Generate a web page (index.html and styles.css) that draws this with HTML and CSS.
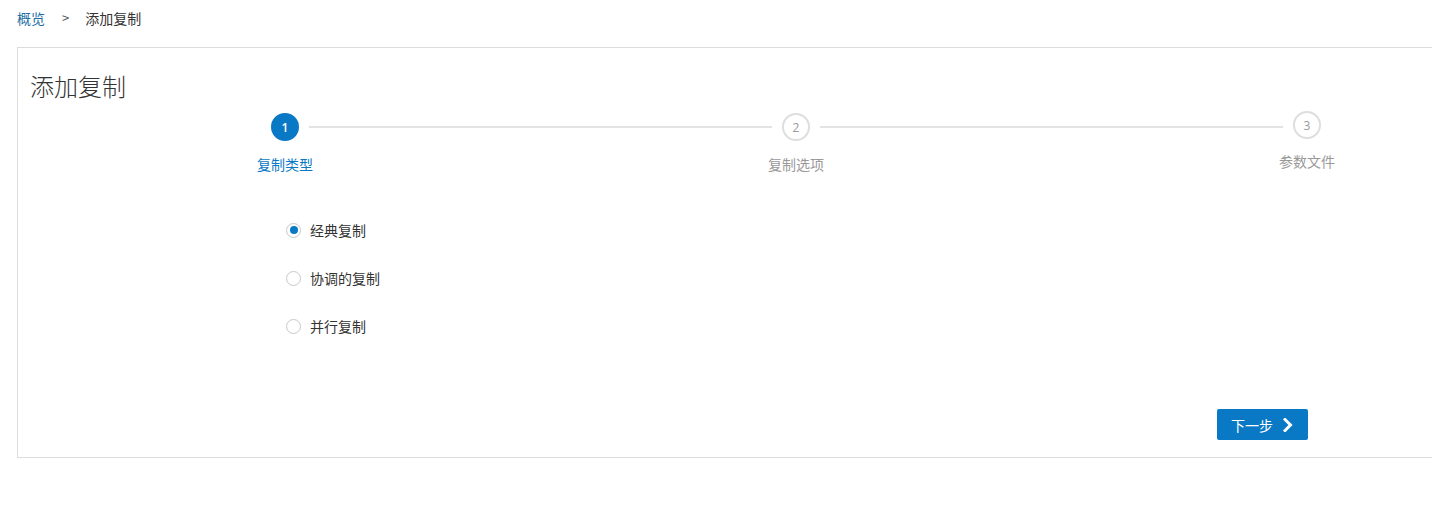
FILE: index.html
```html
<!DOCTYPE html>
<html lang="zh">
<head>
<meta charset="utf-8">
<title>添加复制</title>
<link rel="stylesheet" href="styles.css">
</head>
<body>
<div class="breadcrumb">
  <a class="crumb-link">概览</a>
  <span class="crumb-sep">&gt;</span>
  <span class="crumb-current">添加复制</span>
</div>
<div class="panel">
  <h1 class="title">添加复制</h1>
  <div class="stepper">
    <div class="step active">
      <div class="step-head"><span class="step-circle">1</span><span class="step-line"></span></div>
      <div class="step-label">复制类型</div>
    </div>
    <div class="step">
      <div class="step-head"><span class="step-circle">2</span><span class="step-line"></span></div>
      <div class="step-label">复制选项</div>
    </div>
    <div class="step last">
      <div class="step-head"><span class="step-circle">3</span></div>
      <div class="step-label">参数文件</div>
    </div>
  </div>
  <div class="content">
    <div class="radios">
      <label class="radio-row"><span class="radio checked"></span><span>经典复制</span></label>
      <label class="radio-row"><span class="radio"></span><span>协调的复制</span></label>
      <label class="radio-row"><span class="radio"></span><span>并行复制</span></label>
    </div>
    <div class="actions">
      <button class="btn-next">下一步<svg class="chev" width="10" height="14" viewBox="0 0 10 14"><polyline points="2,1.5 7.5,7 2,12.5" fill="none" stroke="#fff" stroke-width="3" stroke-linecap="square"/></svg></button>
    </div>
  </div>
</div>
</body>
</html>
```
FILE: styles.css
```css
html, body {
  margin: 0;
  padding: 0;
  overflow: hidden;
  background: #fff;
}
body {
  font-family: "Noto Sans CJK SC", "Noto Sans", sans-serif;
  font-size: 14px;
  color: #333;
}
.breadcrumb {
  padding: 8px 17px 0;
  height: 20px;
  line-height: 20px;
  display: flex;
  align-items: center;
}
.crumb-link {
  color: #1f6ea6;
}
.crumb-sep {
  color: #555;
  font-size: 13px;
  margin: 0 17px 0 17px;
}
.crumb-current {
  color: #333;
  margin-left: -1px;
}
.panel {
  margin: 19px -40px 0 17px;
  border: 1px solid #dcdcdc;
  padding: 22px 0 17px 12px;
}
.title {
  margin: 0;
  font-size: 24px;
  font-weight: 300;
  line-height: 32px;
  color: #333;
}
.stepper {
  display: flex;
  margin: 11px 0 0 241px;
}
.step {
  flex: 0 0 511px;
  display: flex;
  flex-direction: column;
}
.step.last {
  flex: 0 0 100px;
}
.step-head {
  display: flex;
  align-items: center;
  height: 28px;
}
.step-circle {
  box-sizing: border-box;
  width: 28px;
  height: 28px;
  border-radius: 50%;
  border: 2px solid #dedede;
  color: #999;
  font-size: 12px;
  display: flex;
  align-items: center;
  justify-content: center;
  font-family: "Open Sans", "Noto Sans", sans-serif;
  flex: none;
}
.step.active .step-circle {
  background: #0a79c5;
  border-color: #0a79c5;
  color: #fff;
  font-weight: 600;
}
.step.last .step-head {
  margin-top: -2px;
}
.step.last .step-label {
  margin-top: 12px;
}
.step-line {
  flex: 1;
  height: 2px;
  background: #e3e3e3;
  margin: 0 10px;
}
.step-label {
  width: 100px;
  margin-left: -36px;
  margin-top: 13px;
  text-align: center;
  line-height: 20px;
  color: #999;
}
.step.active .step-label {
  color: #0a79c5;
}
.content {
  margin-left: 241px;
  width: 1037px;
}
.radios {
  margin-top: 46px;
  padding-left: 15px;
  display: flex;
  flex-direction: column;
  gap: 28px;
}
.radio-row {
  display: flex;
  align-items: center;
  height: 20px;
  line-height: 20px;
  color: #333;
  font-size: 14px;
}
.radio {
  box-sizing: border-box;
  width: 15px;
  height: 15px;
  border-radius: 50%;
  border: 1px solid #c8c8c8;
  margin-right: 9px;
  display: flex;
  align-items: center;
  justify-content: center;
  background: #fff;
}
.radio.checked::after {
  content: "";
  width: 8px;
  height: 8px;
  border-radius: 50%;
  background: #0a79c5;
}
.actions {
  display: flex;
  justify-content: flex-end;
  margin-top: 73px;
}
.btn-next {
  height: 31px;
  width: 91px;
  box-sizing: border-box;
  border: none;
  border-radius: 2px;
  background: #0a79c5;
  color: #fff;
  font-family: "Noto Sans CJK SC", sans-serif;
  font-size: 14px;
  display: flex;
  align-items: center;
  padding: 0 0 0 14px;
  gap: 10px;
}
.chev {
  display: block;
}
```
